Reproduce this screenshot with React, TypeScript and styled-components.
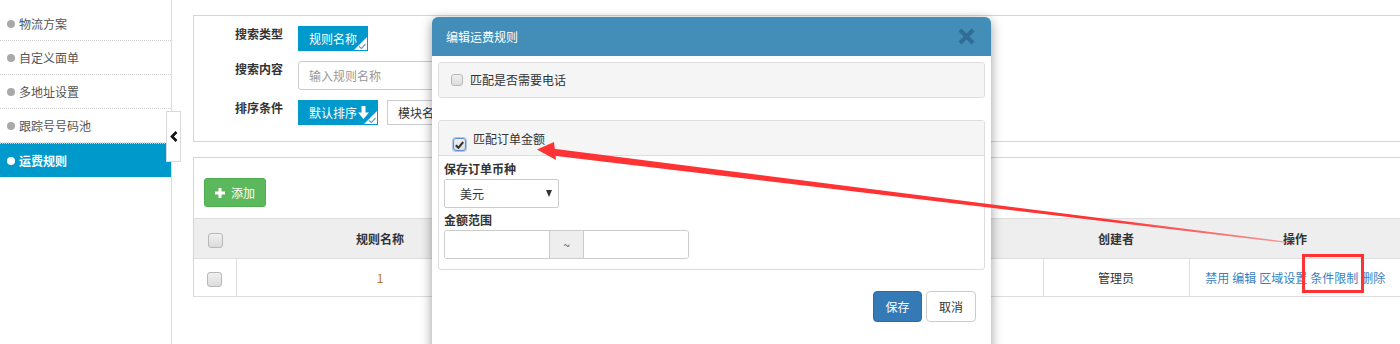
import React from "react";
import styled, { createGlobalStyle } from "styled-components";

const GlobalStyle = createGlobalStyle`
  html, body {
    margin: 0;
    padding: 0;
    background: #fff;
  }
  body {
    font-family: "Noto Sans CJK SC", "Noto Sans", "Liberation Sans", sans-serif;
    font-size: 12px;
    color: #333;
    overflow: hidden;
  }
  * {
    box-sizing: border-box;
  }
`;

const Page = styled.div`
  position: relative;
  display: flex;
  width: 1400px;
  height: 344px;
  overflow: hidden;
`;

const Sidebar = styled.nav`
  position: relative;
  width: 172px;
  flex-shrink: 0;
  padding-top: 7px;
  border-right: 1px solid #dcdcdc;
`;

const MenuItem = styled.div<{ $active?: boolean }>`
  display: flex;
  align-items: center;
  gap: 4px;
  height: 34px;
  padding-left: 7px;
  border-top: ${(p) => (p.$active ? "1px dotted #d0d0d0" : "none")};
  border-bottom: ${(p) => (p.$active ? "none" : "1px dotted #d0d0d0")};
  background: ${(p) => (p.$active ? "#0099cc" : "transparent")};
  color: ${(p) => (p.$active ? "#fff" : "#555")};
  font-weight: ${(p) => (p.$active ? "bold" : "normal")};
  line-height: 16px;
  &:first-child {
    height: 34px;
    padding-top: 0;
  }
`;

const Dot = styled.span<{ $active?: boolean }>`
  width: 8px;
  height: 8px;
  border-radius: 50%;
  background: ${(p) => (p.$active ? "#fff" : "#a9a9a9")};
`;

const CollapseHandle = styled.div`
  position: absolute;
  left: 166px;
  top: 111px;
  width: 15px;
  height: 51px;
  background: #fff;
  border: 1px solid #d8d8d8;
  display: flex;
  align-items: center;
  justify-content: center;
  z-index: 2;
`;

const Main = styled.main`
  flex: 1;
  min-width: 0;
  padding: 15px 0 0 21px;
`;

const SearchPanel = styled.section`
  height: 127px;
  margin-right: -2px;
  padding-top: 10px;
  border: 1px solid #d5d5d5;
  display: grid;
  grid-template-columns: 89px 1fr;
  column-gap: 15px;
  row-gap: 10px;
  align-content: start;
`;

const FieldLabel = styled.div`
  text-align: right;
  font-weight: bold;
  line-height: 16px;
  color: #333;
`;

const FieldControls = styled.div`
  display: flex;
  align-items: center;
  gap: 9px;
`;

const Chip = styled.button<{ $selected?: boolean; $tight?: boolean }>`
  position: relative;
  display: inline-flex;
  align-items: center;
  gap: 1px;
  height: 25px;
  padding: ${(p) => (p.$tight ? "0 8px 0 10px" : "0 10px")};
  border: 1px solid ${(p) => (p.$selected ? "#0099cc" : "#ccc")};
  background: ${(p) => (p.$selected ? "#0099cc" : "#fff")};
  color: ${(p) => (p.$selected ? "#fff" : "#333")};
  font-family: inherit;
  font-size: 12px;
  line-height: 16px;
  cursor: pointer;
`;

const CornerMark = styled.svg`
  position: absolute;
  right: 0;
  bottom: 0;
`;

const TextInput = styled.input`
  width: 320px;
  height: 29px;
  padding: 0 10px;
  border: 1px solid #ccc;
  border-radius: 3px;
  font-family: inherit;
  font-size: 12px;
  color: #333;
  &::placeholder {
    color: #999;
  }
`;

const ListPanel = styled.section`
  margin-top: 15px;
  margin-right: -2px;
  border: 1px solid #d5d5d5;
  border-bottom: none;
`;

const Toolbar = styled.div`
  display: flex;
  padding: 20px 10px 11px;
`;

const AddButton = styled.button`
  display: inline-flex;
  align-items: center;
  gap: 6px;
  height: 29px;
  padding: 0 10px;
  background: #5cb85c;
  border: 1px solid #4cae4c;
  border-radius: 3px;
  color: #fff;
  font-family: inherit;
  font-size: 12px;
`;

const Table = styled.table`
  width: 100%;
  border-collapse: collapse;
  table-layout: fixed;
`;

const Th = styled.th<{ $w?: number }>`
  width: ${(p) => (p.$w ? `${p.$w}px` : "auto")};
  height: 40px;
  padding: 0;
  background: #eee;
  border-top: 1px solid #ddd;
  border-bottom: 1px solid #ddd;
  font-weight: bold;
  color: #333;
  text-align: center;
`;

const Td = styled.td<{ $tone?: string }>`
  height: 38px;
  padding: 0;
  border-bottom: 1px solid #ddd;
  border-left: 1px solid #ddd;
  text-align: center;
  color: ${(p) => p.$tone || "#333"};
  &:first-child {
    border-left: none;
  }
`;

const Box = styled.span<{ $size: number; $checked?: boolean }>`
  display: inline-flex;
  align-items: center;
  justify-content: center;
  width: ${(p) => p.$size}px;
  height: ${(p) => p.$size}px;
  border: 1px solid ${(p) => (p.$checked ? "#5f8fd0" : "#b8b8b8")};
  border-radius: 3px;
  background: linear-gradient(#f0f0f0, #dcdcdc);
  box-shadow: ${(p) => (p.$checked ? "0 0 0 1px #a9c8f0" : "none")};
  vertical-align: middle;
  flex-shrink: 0;
`;

const ActionLink = styled.a`
  color: #3a7fc1;
  text-decoration: none;
  margin: 0 1.5px;
`;

const Modal = styled.div`
  position: absolute;
  left: 432px;
  top: 17px;
  width: 559px;
  background: #fff;
  border-radius: 6px;
  box-shadow: 0 3px 12px rgba(0, 0, 0, 0.4);
  z-index: 5;
`;

const ModalHeader = styled.div`
  display: flex;
  align-items: center;
  justify-content: space-between;
  height: 39px;
  padding: 0 16px 0 14px;
  background: #438eb9;
  border-radius: 6px 6px 0 0;
  color: #fff;
  font-size: 12px;
`;

const ModalBody = styled.div`
  padding: 6px;
`;

const Panel = styled.div<{ $gap?: number }>`
  border: 1px solid #ddd;
  border-radius: 3px;
  margin-bottom: ${(p) => p.$gap || 0}px;
  overflow: hidden;
`;

const PanelHeading = styled.div<{ $top?: boolean }>`
  display: flex;
  align-items: ${(p) => (p.$top ? "flex-start" : "center")};
  gap: 7px;
  height: ${(p) => (p.$top ? 35 : 34)}px;
  padding: ${(p) => (p.$top ? "10px 0 0 14px" : "0 0 0 12px")};
  background: #f5f5f5;
  border-bottom: ${(p) => (p.$top ? "1px solid #ddd" : "none")};
  line-height: 16px;
  color: #333;
`;

const PanelBody = styled.div`
  padding: 3px 5px 10px;
`;

const FormLabel = styled.div`
  font-weight: bold;
  line-height: 20px;
  & + div + & {
    margin-top: 2px;
  }
`;

const Select = styled.div`
  position: relative;
  display: flex;
  align-items: center;
  justify-content: space-between;
  width: 115px;
  height: 29px;
  padding: 0 6px 0 15px;
  border: 1px solid #ccc;
  border-radius: 2px;
  color: #333;
`;

const Caret = styled.span`
  width: 0;
  height: 0;
  border-left: 3.5px solid transparent;
  border-right: 3.5px solid transparent;
  border-top: 7px solid #333;
`;

const InputGroup = styled.div`
  display: flex;
  width: 245px;
  height: 29px;
  border: 1px solid #ccc;
  border-radius: 3px;
  overflow: hidden;
`;

const GroupField = styled.input`
  flex: 1;
  min-width: 0;
  border: none;
  outline: none;
`;

const GroupAddon = styled.span`
  width: 35px;
  display: flex;
  align-items: center;
  justify-content: center;
  background: #eee;
  border-left: 1px solid #ccc;
  border-right: 1px solid #ccc;
  color: #555;
`;

const ModalFooter = styled.div`
  display: flex;
  justify-content: flex-end;
  gap: 4px;
  padding: 15px 15px 40px;
`;

const FooterButton = styled.button<{ $primary?: boolean }>`
  height: 31px;
  width: ${(p) => (p.$primary ? 49 : 50)}px;
  border-radius: 4px;
  border: 1px solid ${(p) => (p.$primary ? "#2e6da4" : "#ccc")};
  background: ${(p) => (p.$primary ? "#337ab7" : "#fff")};
  color: ${(p) => (p.$primary ? "#fff" : "#333")};
  font-family: inherit;
  font-size: 12px;
`;

const Annotation = styled.svg`
  position: absolute;
  left: 0;
  top: 0;
  z-index: 10;
  pointer-events: none;
`;

const menu = ["物流方案", "自定义面单", "多地址设置", "跟踪号号码池", "运费规则"];
const actions = ["禁用", "编辑", "区域设置", "条件限制", "删除"];

function Corner() {
  return (
    <CornerMark width="13" height="13" viewBox="0 0 13 13">
      <polygon points="13,0 13,13 0,13" fill="#fff" />
      <polyline points="5,9.5 7.5,11.5 11.5,7" fill="none" stroke="#6a9cc4" strokeWidth="1.2" />
    </CornerMark>
  );
}

function Tick() {
  return (
    <svg width="9" height="8" viewBox="0 0 9 8">
      <path d="M0.8 4.2 L3.4 6.8 L8.2 1" fill="none" stroke="#333" strokeWidth="2" />
    </svg>
  );
}

export default function App() {
  return (
    <>
      <GlobalStyle />
      <Page>
        <Sidebar>
          {menu.map((m, i) => (
            <MenuItem key={m} $active={i === menu.length - 1}>
              <Dot $active={i === menu.length - 1} />
              {m}
            </MenuItem>
          ))}
          <CollapseHandle>
            <svg width="8" height="11" viewBox="0 0 8 11">
              <polyline points="6.5,1 2,5.5 6.5,10" fill="none" stroke="#111" strokeWidth="2.6" />
            </svg>
          </CollapseHandle>
        </Sidebar>

        <Main>
          <SearchPanel>
            <FieldLabel>搜索类型</FieldLabel>
            <FieldControls>
              <Chip $selected>
                规则名称
                <Corner />
              </Chip>
            </FieldControls>
            <FieldLabel>搜索内容</FieldLabel>
            <FieldControls>
              <TextInput placeholder="输入规则名称" />
            </FieldControls>
            <FieldLabel>排序条件</FieldLabel>
            <FieldControls>
              <Chip $selected $tight>
                默认排序
                <svg width="11" height="13" viewBox="0 0 11 13">
                  <path d="M3.5 0h4v6.5h3.5l-5.5 6.5-5.5-6.5h3.5z" fill="#fff" />
                </svg>
                <Corner />
              </Chip>
              <Chip>模块名称</Chip>
            </FieldControls>
          </SearchPanel>

          <ListPanel>
            <Toolbar>
              <AddButton>
                <svg width="10" height="10" viewBox="0 0 10 10">
                  <path d="M3.5 0h3v3.5h3.5v3h-3.5v3.5h-3v-3.5h-3.5v-3h3.5z" fill="#fff" />
                </svg>
                添加
              </AddButton>
            </Toolbar>
            <Table>
              <thead>
                <tr>
                  <Th $w={42}>
                    <Box $size={15} />
                  </Th>
                  <Th $w={288}>规则名称</Th>
                  <Th $w={257}>运费模板</Th>
                  <Th $w={262}>状态</Th>
                  <Th $w={146}>创建者</Th>
                  <Th>操作</Th>
                </tr>
              </thead>
              <tbody>
                <tr>
                  <Td>
                    <Box $size={15} />
                  </Td>
                  <Td $tone="#b8731a">1</Td>
                  <Td>默认</Td>
                  <Td>启用</Td>
                  <Td>管理员</Td>
                  <Td>
                    {actions.map((a) => (
                      <ActionLink key={a}>{a}</ActionLink>
                    ))}
                  </Td>
                </tr>
              </tbody>
            </Table>
          </ListPanel>
        </Main>

        <Modal>
          <ModalHeader>
            编辑运费规则
            <svg width="17" height="17" viewBox="0 0 17 17">
              <path d="M2 2 L15 15 M15 2 L2 15" stroke="#2f6a90" strokeWidth="4" opacity="0.9" />
            </svg>
          </ModalHeader>
          <ModalBody>
            <Panel $gap={22}>
              <PanelHeading>
                <Box $size={12} />
                匹配是否需要电话
              </PanelHeading>
            </Panel>
            <Panel>
              <PanelHeading $top>
                <Box $size={13} $checked style={{ marginTop: 7 }}>
                  <Tick />
                </Box>
                匹配订单金额
              </PanelHeading>
              <PanelBody>
                <FormLabel>保存订单币种</FormLabel>
                <Select>
                  美元
                  <Caret />
                </Select>
                <FormLabel>金额范围</FormLabel>
                <InputGroup>
                  <GroupField />
                  <GroupAddon>~</GroupAddon>
                  <GroupField />
                </InputGroup>
              </PanelBody>
            </Panel>
          </ModalBody>
          <ModalFooter>
            <FooterButton $primary>保存</FooterButton>
            <FooterButton>取消</FooterButton>
          </ModalFooter>
        </Modal>

        <Annotation width="1400" height="344" viewBox="0 0 1400 344">
          <defs>
            <linearGradient id="fade" x1="553" y1="0" x2="1292" y2="0" gradientUnits="userSpaceOnUse">
              <stop offset="0" stopColor="#ff3333" />
              <stop offset="0.75" stopColor="#ff3333" />
              <stop offset="1" stopColor="#ff3333" stopOpacity="0.45" />
            </linearGradient>
          </defs>
          <polygon points="552,148.5 1292,242.4 1292,243.6 552,155.5" fill="url(#fade)" />
          <polygon points="537,149.5 554,142 556,160" fill="#ff3333" />
          <rect x="1303.5" y="255.5" width="59" height="36" fill="none" stroke="#ff3333" strokeWidth="3" />
        </Annotation>
      </Page>
    </>
  );
}
